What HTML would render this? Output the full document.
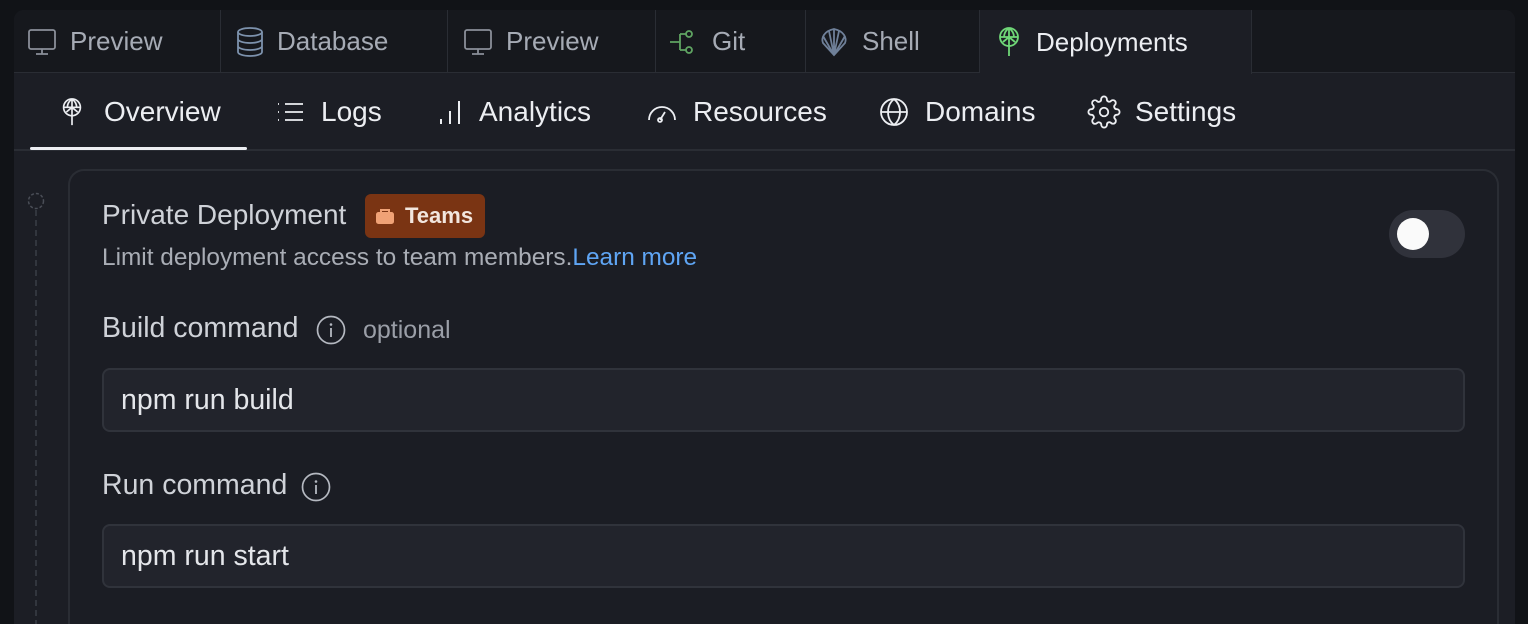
<!DOCTYPE html>
<html><head><meta charset="utf-8"><style>
*{box-sizing:border-box;margin:0;padding:0}
html,body{width:1528px;height:624px;overflow:hidden}
body{background:#111317;font-family:"Liberation Sans",sans-serif;position:relative}
.panel{position:absolute;left:14px;top:10px;width:1501px;height:614px;background:#1c1e25;border-radius:10px 10px 0 0;overflow:hidden}
.tabs{position:absolute;left:0;top:0;height:63px;width:100%;background:#16181d;border-bottom:1px solid #2a2d34}
.tab{position:absolute;top:0;height:63px;display:flex;align-items:center;font-size:26px;color:#a6abb5;border-right:1px solid #2a2d34}
.tab svg{margin-right:12px}
.tab.act{background:#1c1e25;color:#eceef2;height:64px}
.sub{position:absolute;top:63px;left:0;width:100%;height:78px;border-bottom:2px solid #2a2d34}
.si{position:absolute;top:0;height:78px;display:flex;align-items:center;font-size:28px;color:#eceef2}
.ul{position:absolute;left:16px;top:74px;width:217px;height:3px;background:#eceef2;border-radius:2px}
.card{position:absolute;left:68px;top:169px;width:1431px;height:455px;border:2px solid #2a2d34;border-bottom:0;border-radius:16px 16px 0 0;background:#1b1d24}
.t{position:absolute;color:#cfd2d8;white-space:nowrap}
.inp{position:absolute;left:102px;width:1363px;height:64px;background:#22242c;border:2px solid #30333b;border-radius:8px;font-size:28.5px;color:#e4e6ea;padding-left:17px;line-height:60px}
</style></head><body>
<div class="panel">
 <div class="tabs">
  <div class="tab" style="left:0;width:207px;padding-left:12px"><svg width="32" height="32" viewBox="0 0 32 32" fill="none" stroke="#8a8f99" stroke-width="1.8"><rect x="3" y="4" width="26" height="19" rx="2"/><path d="M16 23v5M10 28h12"/></svg>Preview</div>
  <div class="tab" style="left:207px;width:227px;padding-left:14px"><svg width="30" height="32" viewBox="0 0 30 32" fill="none" stroke="#7d92ad" stroke-width="1.8"><ellipse cx="15" cy="6" rx="12" ry="4"/><path d="M3 6v20c0 2.2 5.4 4 12 4s12-1.8 12-4V6M3 13c0 2.2 5.4 4 12 4s12-1.8 12-4M3 20c0 2.2 5.4 4 12 4s12-1.8 12-4"/></svg>Database</div>
  <div class="tab" style="left:434px;width:208px;padding-left:14px"><svg width="32" height="32" viewBox="0 0 32 32" fill="none" stroke="#8a8f99" stroke-width="1.8"><rect x="3" y="4" width="26" height="19" rx="2"/><path d="M16 23v5M10 28h12"/></svg>Preview</div>
  <div class="tab" style="left:642px;width:150px;padding-left:12px"><svg width="32" height="32" viewBox="0 0 32 32" fill="none" stroke="#5fa462" stroke-width="1.8"><path d="M2 16h10M12 8v16M12 8h6M12 24h6"/><circle cx="21" cy="8" r="3"/><circle cx="21" cy="24" r="3"/></svg>Git</div>
  <div class="tab" style="left:792px;width:174px;padding-left:12px"><svg width="32" height="32" viewBox="0 0 32 32" fill="none" stroke="#6f8099" stroke-width="1.8"><path d="M16 29L5 17C3 12 6 5 16 3c10 2 13 9 11 14z"/><path d="M16 29l-5-24M16 29l5-24M16 29V3M16 29L5 10M16 29l11-19"/></svg>Shell</div>
  <div class="tab act" style="left:966px;width:272px;padding-left:14px"><svg width="30" height="34" viewBox="0 0 30 34" fill="none" stroke="#6fd777" stroke-width="1.8"><circle cx="15" cy="12" r="9"/><path d="M6 12h18M15 3v28M15 3c-4 3-5 6-5 9M15 3c4 3 5 6 5 9M9 17l6-5 6 5"/></svg>Deployments</div>
 </div>
 <div class="sub">
  <div class="si" style="left:44px"><svg style="margin-right:18px" width="28" height="34" viewBox="0 0 30 34" fill="none" stroke="#eceef2" stroke-width="1.8"><circle cx="15" cy="12" r="9"/><path d="M6 12h18M15 3v28M15 3c-4 3-5 6-5 9M15 3c4 3 5 6 5 9M9 17l6-5 6 5"/></svg>Overview</div>
  <div class="si" style="left:262px"><svg style="margin-right:15px" width="30" height="26" viewBox="0 0 30 26" fill="none" stroke="#eceef2" stroke-width="1.8"><path d="M2 5h1M2 13h1M2 21h1M9 5h18M9 13h18M9 21h18"/></svg>Logs</div>
  <div class="si" style="left:423px"><svg style="margin-right:12px" width="30" height="28" viewBox="0 0 30 28" fill="none" stroke="#eceef2" stroke-width="2"><path d="M4 26v-5M13 26V13M22 26V3"/></svg>Analytics</div>
  <div class="si" style="left:632px"><svg style="margin-right:15px" width="32" height="28" viewBox="0 0 32 28" fill="none" stroke="#eceef2" stroke-width="1.8"><path d="M3 22a13 13 0 0 1 26 0"/><path d="M14 22l5-8"/><circle cx="14" cy="22" r="2"/></svg>Resources</div>
  <div class="si" style="left:864px"><svg style="margin-right:15px" width="32" height="32" viewBox="0 0 32 32" fill="none" stroke="#eceef2" stroke-width="1.8"><circle cx="16" cy="16" r="13"/><path d="M3 16h26M16 3c-5 4-6 9-6 13s1 9 6 13M16 3c5 4 6 9 6 13s-1 9-6 13"/></svg>Domains</div>
  <div class="si" style="left:1073px"><svg style="margin-right:14px" width="34" height="34" viewBox="0 0 24 24" fill="none" stroke="#eceef2" stroke-width="1.3"><circle cx="12" cy="12" r="3"/><path d="M19.4 15a1.65 1.65 0 0 0 .33 1.820l.06.06a2 2 0 1 1-2.830 2.830l-.06-.06a1.65 1.65 0 0 0-1.820-.33 1.65 1.65 0 0 0-1 1.510V21a2 2 0 1 1-4 0v-.09A1.65 1.65 0 0 0 9 19.4a1.65 1.65 0 0 0-1.820.33l-.06.06a2 2 0 1 1-2.830-2.830l.06-.06A1.65 1.65 0 0 0 4.680 15a1.65 1.65 0 0 0-1.510-1H3a2 2 0 1 1 0-4h.09A1.65 1.65 0 0 0 4.6 9a1.65 1.65 0 0 0-.33-1.820l-.06-.06a2 2 0 1 1 2.830-2.830l.06.06A1.65 1.65 0 0 0 9 4.680 1.65 1.65 0 0 0 10 3.170V3a2 2 0 1 1 4 0v.09a1.65 1.65 0 0 0 1 1.510 1.65 1.65 0 0 0 1.820-.33l.06-.06a2 2 0 1 1 2.830 2.830l-.06.06A1.65 1.65 0 0 0 19.4 9a1.65 1.65 0 0 0 1.510 1H21a2 2 0 1 1 0 4h-.09a1.65 1.65 0 0 0-1.510 1z"/></svg>Settings</div>
  <div class="ul"></div>
 </div>
 <svg style="position:absolute;left:12px;top:182px" width="22" height="432"><circle cx="10" cy="9" r="7.5" fill="none" stroke="#4a4e57" stroke-width="1.5" stroke-dasharray="3 2"/><line x1="10" y1="18" x2="10" y2="432" stroke="#3a3e46" stroke-width="1.5" stroke-dasharray="6 4"/></svg>
</div>
<div class="card"></div>
<div class="t" style="left:102px;top:199px;font-size:28px">Private Deployment</div>
<div style="position:absolute;left:365px;top:194px;width:120px;height:44px;background:#7a3413;border-radius:6px;color:#f2e6de;font-size:22px;font-weight:bold;line-height:44px;padding-left:40px">Teams</div>
<svg style="position:absolute;left:374px;top:205px" width="22" height="22" viewBox="0 0 22 22"><path d="M7 7V5h8v2" fill="none" stroke="#f0a276" stroke-width="2"/><rect x="2" y="7" width="18" height="12" rx="2.5" fill="#f0a276"/></svg>
<div class="t" style="left:102px;top:244px;font-size:24.4px;color:#a9adb5">Limit deployment access to team members.<span style="color:#5fa5f4">Learn more</span></div>
<div style="position:absolute;left:1389px;top:210px;width:76px;height:48px;border-radius:24px;background:#30323b"></div>
<div style="position:absolute;left:1397px;top:218px;width:32px;height:32px;border-radius:50%;background:#fafafa"></div>
<div class="t" style="left:102px;top:312px;font-size:28.5px">Build command</div>
<svg style="position:absolute;left:316px;top:315px" width="30" height="30"><circle cx="15" cy="15" r="13.5" fill="none" stroke="#b5b9c1" stroke-width="1.7"/><circle cx="15" cy="9.5" r="1.3" fill="#b5b9c1"/><path d="M15 13v9" stroke="#b5b9c1" stroke-width="1.8"/></svg>
<div class="t" style="left:363px;top:316px;font-size:25px;color:#9a9ea7">optional</div>
<div class="inp" style="top:368px">npm run build</div>
<div class="t" style="left:102px;top:469px;font-size:28.5px">Run command</div>
<svg style="position:absolute;left:301px;top:472px" width="30" height="30"><circle cx="15" cy="15" r="13.5" fill="none" stroke="#b5b9c1" stroke-width="1.7"/><circle cx="15" cy="9.5" r="1.3" fill="#b5b9c1"/><path d="M15 13v9" stroke="#b5b9c1" stroke-width="1.8"/></svg>
<div class="inp" style="top:524px">npm run start</div>
</body></html>
